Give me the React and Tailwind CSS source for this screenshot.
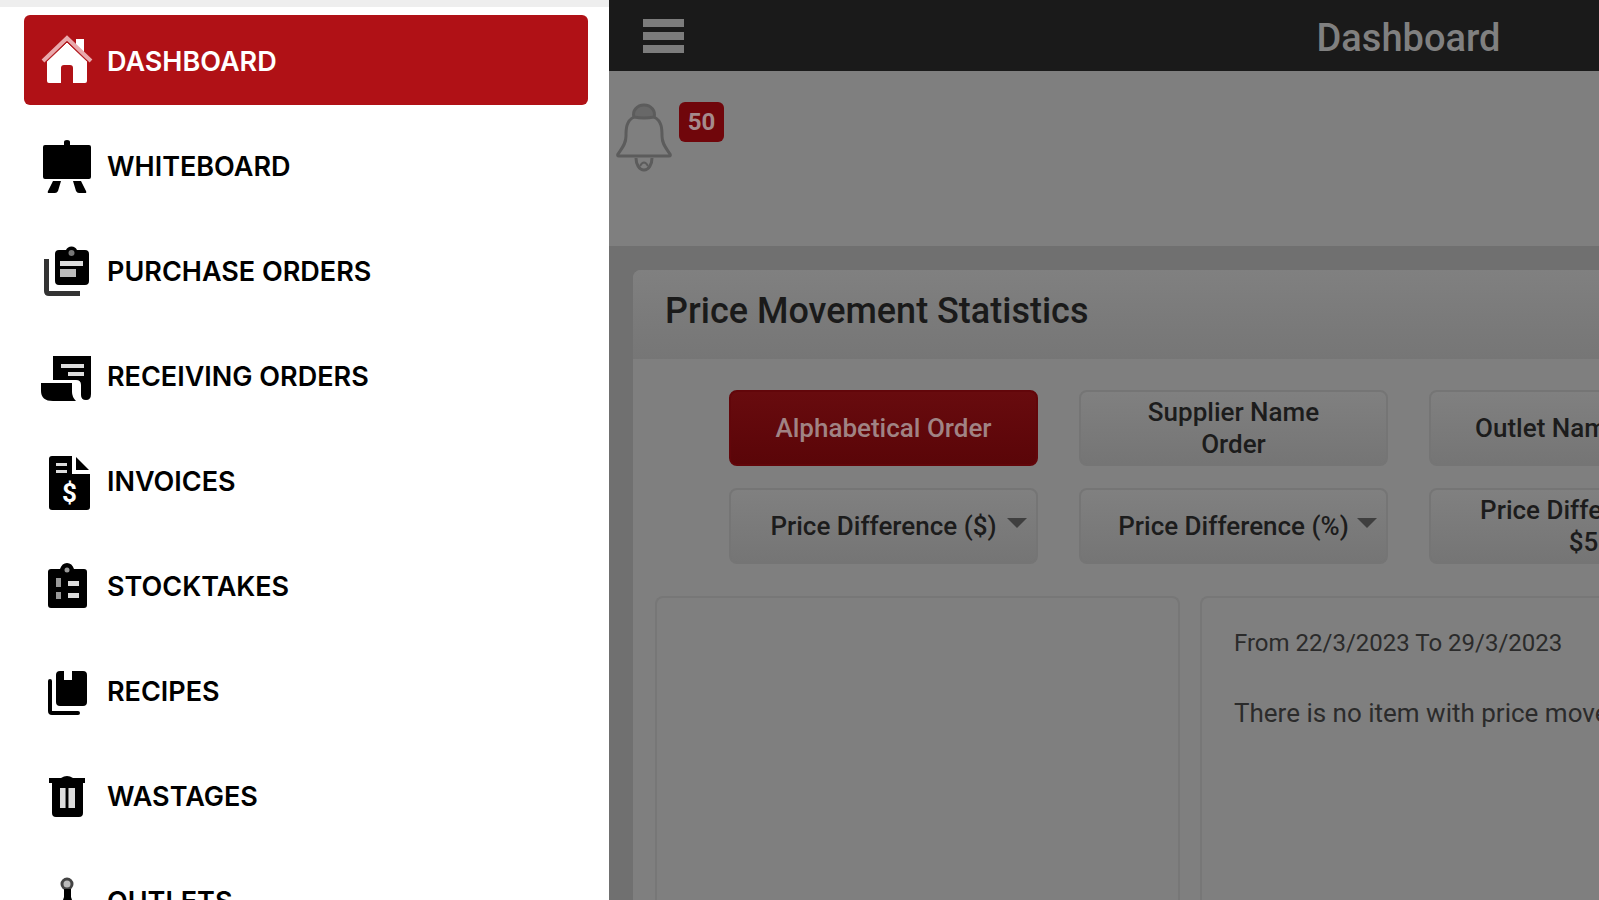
const MENU = [
  { id: "dashboard", label: "DASHBOARD", icon: HomeIcon },
  { id: "whiteboard", label: "WHITEBOARD", icon: EaselIcon },
  { id: "purchase", label: "PURCHASE ORDERS", icon: ClipboardsIcon },
  { id: "receiving", label: "RECEIVING ORDERS", icon: ReceiptIcon },
  { id: "invoices", label: "INVOICES", icon: InvoiceIcon },
  { id: "stocktakes", label: "STOCKTAKES", icon: ChecklistIcon },
  { id: "recipes", label: "RECIPES", icon: BooksIcon },
  { id: "wastages", label: "WASTAGES", icon: BinIcon },
  { id: "outlets", label: "OUTLETS", icon: OutletIcon },
]

function MenuSvg({ children }) {
  return (
    <svg viewBox="0 0 52 58" className="w-[52px] h-[58px] shrink-0" fill="currentColor" aria-hidden="true">
      {children}
    </svg>
  )
}

function HomeIcon() {
  return (
    <MenuSvg>
      <path d="M35 7h8v17l-8-8z" />
      <path d="M26 10 46 29v20a2 2 0 0 1-2 2H32V36q0-3-3-3h-6q-3 0-3 3v15H8a2 2 0 0 1-2-2V29z" />
      <path d="M2 29 26 6l24 23" fill="none" stroke="#e9a9ac" strokeWidth="4" />
      <path d="M4 31 26 10l22 21" fill="none" stroke="#b01116" strokeWidth="1" />
    </MenuSvg>
  )
}

function EaselIcon() {
  return (
    <MenuSvg>
      <path d="M23 8V5q0-2 3-2t3 2v3h19q2 0 2 2v30q0 2-2 2H4q-2 0-2-2V10q0-2 2-2z" />
      <path d="M12 44h8l-3 10q-1 2-3 2H8q-2 0-1-2zM32 44h8l5 10q1 2-1 2h-6q-2 0-3-2z" />
    </MenuSvg>
  )
}

function ClipboardsIcon() {
  return (
    <MenuSvg>
      <path d="M3 17h5v32h31v5H8q-5 0-5-5z" fill="#333" />
      <path d="M18 8h7a6 6 0 0 1 11 0h8q4 0 4 4v27q0 4-4 4H18q-4 0-4-4V12q0-4 4-4z" />
      <circle cx="30.500" cy="11" r="3" fill="#777" />
      <path d="M19 19h23v5H19z" fill="#ddd" />
      <path d="M19 27h16v8H19z" fill="#bbb" />
    </MenuSvg>
  )
}

function ReceiptIcon() {
  return (
    <MenuSvg>
      <path d="M12 9h38v38q0 6-5 6t-5-5V38q0-5-5-5H12z" />
      <path d="M0 36h31v9q0 5 4 9H12Q0 54 0 44z" />
      <path d="M20 17h23v4H20zM27 25h16v4H27z" fill="#ddd" />
    </MenuSvg>
  )
}

function InvoiceIcon() {
  return (
    <MenuSvg>
      <path d="M11 4h20v18h18v33q0 3-3 3H11q-3 0-3-3V7q0-3 3-3z" />
      <path d="M35 5 48 18H35z" />
      <path d="M15 11h11v3H15zM15 18h11v3H15z" fill="#ddd" />
      <text x="28.500" y="50" textAnchor="middle" fill="#fff" className="font-['Roboto',sans-serif] text-[26px] font-bold">
        $
      </text>
    </MenuSvg>
  )
}

function ChecklistIcon() {
  return (
    <MenuSvg>
      <path d="M10 12h9q2-6 7-6t7 6h10q3 0 3 3v33q0 3-3 3H10q-3 0-3-3V15q0-3 3-3z" />
      <circle cx="26" cy="13" r="2.500" fill="#999" />
      <path d="M27 24h11v5H27zM27 36h11v5H27z" fill="#ddd" />
      <path d="M15 21h5v9h-5zM15 35h5v7h-5z" fill="#999" />
    </MenuSvg>
  )
}

function BooksIcon() {
  return (
    <MenuSvg>
      <path d="M19 9h4v9h8V9h11q4 0 4 4v27q0 4-4 4H19q-4 0-4-4V13q0-4 4-4z" />
      <path d="M9 19v30q0 2 2 2h26" fill="none" stroke="currentColor" strokeWidth="4" strokeLinecap="round" />
    </MenuSvg>
  )
}

function BinIcon() {
  return (
    <MenuSvg>
      <path d="M8 11h12q6-4 12 0h12v5h-2v30q0 4-4 4H15q-4 0-4-4V16H8z" />
      <path d="M19 21h5v20h-5zM28 21h6v20h-6z" fill="#ddd" />
      <path d="M24 21h1v20h-1zM27 21h1v20h-1z" fill="#777" />
    </MenuSvg>
  )
}

function OutletIcon() {
  return (
    <MenuSvg>
      <circle cx="26" cy="12" r="5" fill="#bbb" stroke="#444" strokeWidth="3" />
      <path d="M23 17h7v8l2 6v27H21V31l2-6z" />
    </MenuSvg>
  )
}

function BellIcon() {
  return (
    <svg viewBox="0 0 56 70" className="w-14 h-[70px]" fill="none" stroke="#5c5c5c" strokeWidth="3" aria-hidden="true">
      <path d="M18 15C10 19 10 27 10 34c0 8-4 12-8 18q-1 2 1 2h50q2 0 1-2c-4-6-8-10-8-18 0-7 0-15-8-19" strokeLinejoin="round" />
      <path d="M18 15c-2-6 3-12 10-12s12 6 10 12q-10 2-20 0z" fill="#686868" />
      <path d="M20 56c0 6 3 12 8 12s8-6 8-12" />
      <path d="M24 64q4-7 8 0" strokeWidth="2" />
    </svg>
  )
}

function Sidebar({ active }) {
  return (
    <nav className="w-[609px] shrink-0 bg-white font-['Inter',sans-serif]">
      <div className="h-[7px] bg-[#eee]" />
      <ul className="flex flex-col gap-[15px] pt-2 pr-[21px] pl-6">
        {MENU.map(({ id, label, icon: Icon }) => (
          <li key={id}>
            <a
              href={`#${id}`}
              aria-current={id === active ? "page" : undefined}
              className={`flex h-[90px] items-center gap-[14px] rounded-md pt-[2px] pl-[17px] text-[27px] font-semibold ${
                id === active ? "bg-[#b01116] text-white" : "text-black"
              }`}
            >
              <Icon />
              <span className="pt-[2px]">{label}</span>
            </a>
          </li>
        ))}
      </ul>
    </nav>
  )
}

function FilterButton({ active, children }) {
  return (
    <button
      type="button"
      className={`h-[76px] rounded-lg border-2 px-10 text-[26px] leading-8 font-medium ${
        active
          ? "border-[#62060a] bg-linear-to-b from-[#680b0e] to-[#5a0508] text-[#a08384]"
          : "border-[#757575] bg-linear-to-b from-[#808080] to-[#757575] text-[#1c1c1c]"
      }`}
    >
      {children}
    </button>
  )
}

function FilterSelect({ label }) {
  return (
    <div className="relative">
      <select
        aria-label={label}
        className="h-[76px] w-full appearance-none rounded-lg border-2 border-[#757575] bg-linear-to-b from-[#808080] to-[#757575] text-center text-[26px] font-medium text-[#1c1c1c]"
      >
        <option>{label}</option>
      </select>
      <svg viewBox="0 0 20 10" className="pointer-events-none absolute top-[30px] right-[11px] h-[10px] w-5" fill="#3f3f3f" aria-hidden="true">
        <path d="M0 0h20L10 10z" />
      </svg>
    </div>
  )
}

export default function App() {
  return (
    <div className="flex h-screen overflow-hidden bg-[#707070] font-['Roboto',sans-serif]">
      <Sidebar active="dashboard" />
      <div className="flex w-full shrink-0 flex-col">
        <header className="grid h-[71px] shrink-0 grid-cols-[1fr_auto_1fr] items-center bg-[#1a1a1a] px-[34px]">
          <button type="button" aria-label="Menu" className="flex w-[41px] flex-col gap-[5px]">
            <span className="h-2 bg-[#7c7c7c]" />
            <span className="h-2 bg-[#7c7c7c]" />
            <span className="h-2 bg-[#7c7c7c]" />
          </button>
          <h1 className="pt-1 text-[38px] leading-none font-medium text-[#808080]">Dashboard</h1>
        </header>

        <div className="flex h-[175px] shrink-0 items-start gap-[7px] bg-[#7f7f7f] pt-[31px] pl-[7px]">
          <button type="button" aria-label="Notifications">
            <BellIcon />
          </button>
          <span className="flex h-10 w-[45px] items-center justify-center rounded-md bg-[#70060b] text-[24px] font-bold text-[#a58b8c]">
            50
          </span>
        </div>

        <section className="mx-6 mt-6 flex grow flex-col rounded-t-lg bg-[#7f7f7f]">
          <h2 className="flex h-[89px] shrink-0 items-center rounded-t-lg bg-linear-to-b from-[#808080] to-[#767676] pb-2 pl-8 text-[36px] font-medium text-[#1a1a1a]">
            Price Movement Statistics
          </h2>
          <div className="grid grid-cols-4 gap-x-[41px] gap-y-[22px] px-24 pt-[31px]">
            <FilterButton active>Alphabetical Order</FilterButton>
            <FilterButton>Supplier Name Order</FilterButton>
            <FilterButton>Outlet Name Order</FilterButton>
            <div />
            <FilterSelect label="Price Difference ($)" />
            <FilterSelect label="Price Difference (%)" />
            <FilterButton>Price Difference &gt; $5</FilterButton>
          </div>
          <div className="mx-[22px] mt-8 flex grow gap-5">
            <div className="w-[525px] shrink-0 rounded-t-lg border-2 border-b-0 border-[#777]" />
            <div className="grow rounded-t-lg border-2 border-b-0 border-[#777] px-8 pt-7 leading-[35px] text-[#2b2b2b]">
              <p className="text-[24px]">From 22/3/2023 To 29/3/2023</p>
              <p className="mt-[35px] text-[26px]">There is no item with price movement.</p>
            </div>
          </div>
        </section>
      </div>
    </div>
  )
}
